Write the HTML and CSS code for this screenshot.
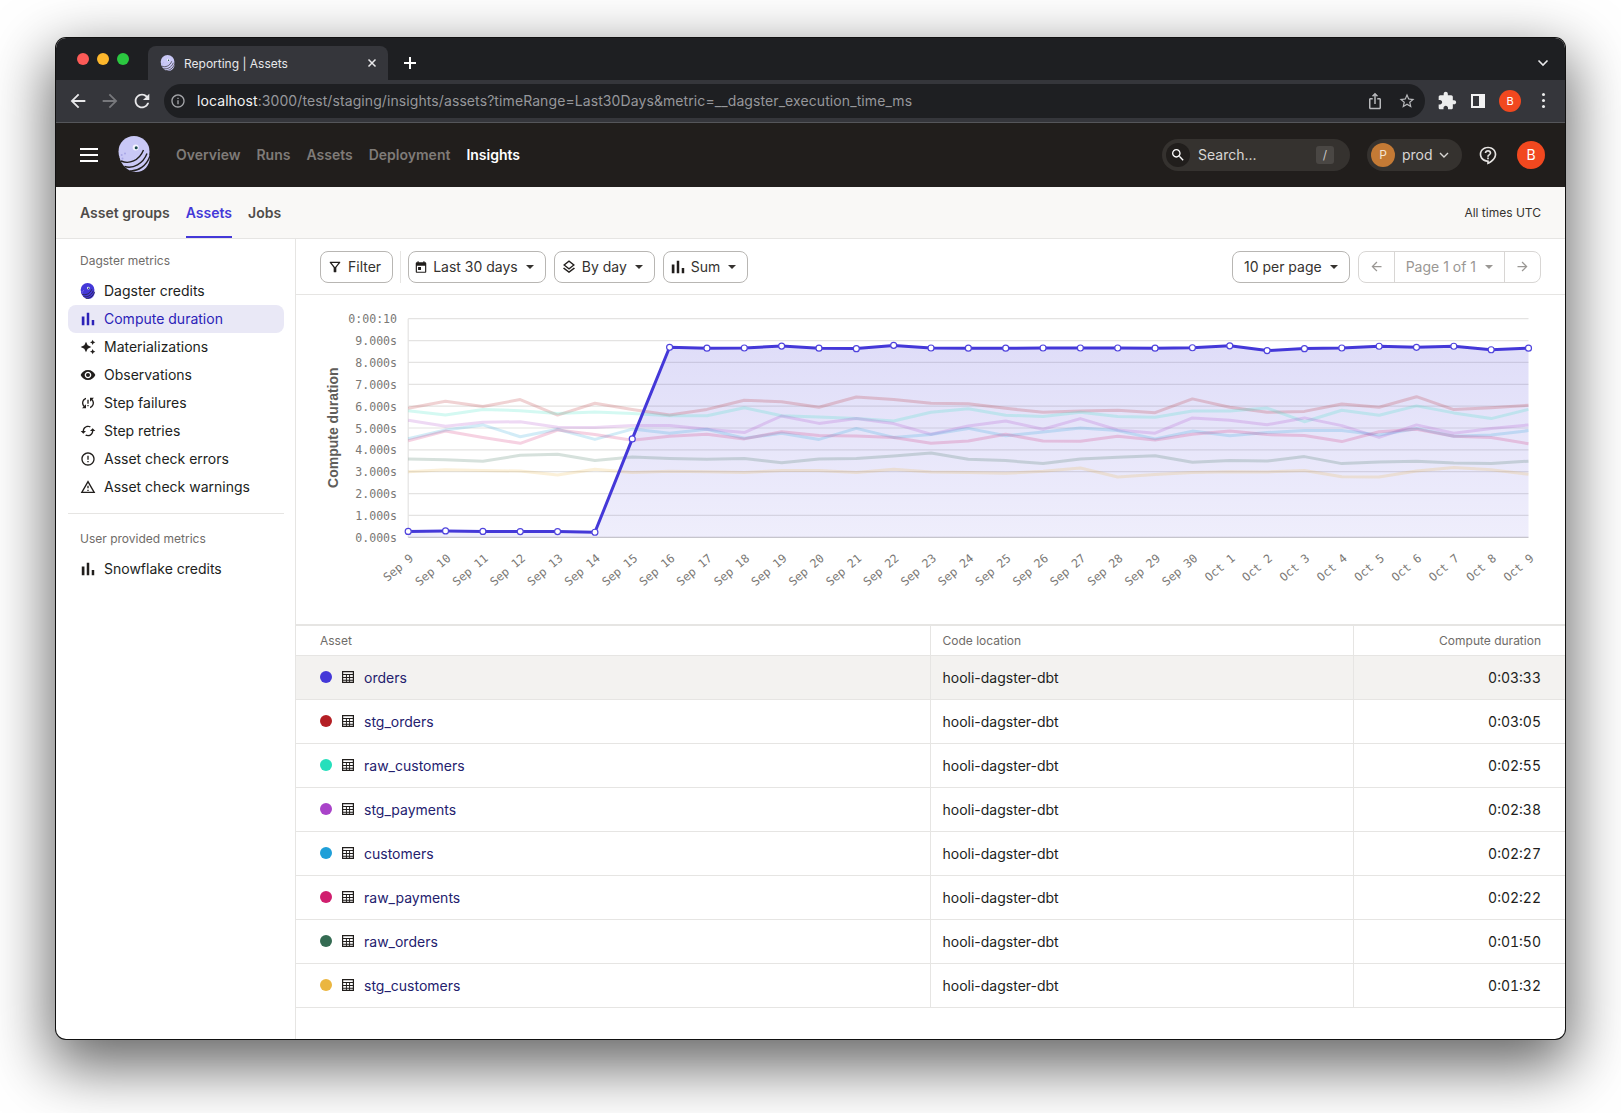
FILE: index.html
```html
<!DOCTYPE html>
<html lang="en">
<head>
    <meta charset="UTF-8">
    <meta name="viewport" content="width=device-width, initial-scale=1.0">
    <title>Reporting | Assets</title>
    <link rel="stylesheet" href="styles.css">
</head>
<body>
    <!-- Shared icons -->
    <svg class="icon-defs" width="0" height="0">
        <symbol id="i-bars" viewBox="3 3 18 18"><path d="M5 9.200h3V19H5zM10.600 5h2.800v14h-2.800zm5.600 8H19v6h-2.800z"/></symbol>
        <symbol id="i-table" viewBox="0 0 14 14"><path d="M0 0h14v14H0zM1.400 1.400v2.200h11.200V1.400zm0 3.400v2.300h3.200V4.800zm4.300 0v2.300h2.600V4.800zm3.700 0v2.300h3.200V4.800zM1.400 8.200v2h3.200v-2zm4.300 0v2h2.600v-2zm3.700 0v2h3.200v-2zm-8 3.100v1.300h3.200v-1.300zm4.300 0v1.300h2.600v-1.300zm3.700 0v1.300h3.200v-1.300z" fill-rule="evenodd"/></symbol>
        <symbol id="i-logo" viewBox="0 0 36 36">
            <circle cx="17" cy="15.500" r="15.500"/>
            <path d="M2.500 21C4 29 11 36 19 36c8 0 13.500-6 14-15l-3-6z"/>
            <path class="logo-cut" d="M4 25C12 28.500 22 25 26.500 14M7.500 30.500C16 33 26 28 30 17.500M13 35C21 35.500 29.500 30 33 20" fill="none" stroke-width="1.400"/>
            <circle class="logo-spot" cx="4.700" cy="19" r="1"/>
            <circle class="logo-spot" cx="8" cy="17.500" r="1"/>
            <circle class="logo-spot" cx="5.500" cy="22.500" r="1"/>
            <circle class="logo-eye" cx="18.700" cy="11.500" r="3"/>
            <circle class="logo-pupil" cx="19.200" cy="11.800" r="1.500"/>
        </symbol>
    </svg>

    <div class="window">
        <!-- Browser chrome -->
        <div class="tabstrip">
            <div class="lights">
                <span class="light light-red"></span>
                <span class="light light-yellow"></span>
                <span class="light light-green"></span>
            </div>
            <div class="tab">
                <svg class="logo logo-tab"><use href="#i-logo"/></svg>
                <span class="tab-title">Reporting | Assets</span>
                <svg class="tab-close" viewBox="0 0 10 10"><path d="M1.500 1.500l7 7M8.500 1.500l-7 7"/></svg>
            </div>
            <svg class="tab-new" viewBox="0 0 12 12"><path d="M6 0v12M0 6h12"/></svg>
            <svg class="tab-more" viewBox="0 0 12 8"><path d="M1.500 1.500L6 6l4.500-4.500"/></svg>
        </div>
        <div class="toolbar">
            <svg class="tool-icon" viewBox="0 0 24 24"><path d="M20 11H7.830l5.590-5.590L12 4l-8 8 8 8 1.410-1.410L7.830 13H20v-2z"/></svg>
            <svg class="tool-icon tool-off" viewBox="0 0 24 24"><path d="M12 4l-1.410 1.410L16.170 11H4v2h12.170l-5.580 5.590L12 20l8-8z"/></svg>
            <svg class="tool-icon" viewBox="0 0 24 24"><path d="M17.650 6.350C16.200 4.900 14.210 4 12 4c-4.420 0-7.990 3.580-7.990 8s3.570 8 7.990 8c3.730 0 6.840-2.550 7.730-6h-2.080c-.82 2.330-3.040 4-5.650 4-3.310 0-6-2.690-6-6s2.690-6 6-6c1.660 0 3.140.69 4.220 1.780L13 11h7V4l-2.350 2.350z"/></svg>
            <div class="addressbar">
                <svg class="addr-info" viewBox="0 0 24 24"><path d="M11 7h2v2h-2zm0 4h2v6h-2zm1-9C6.480 2 2 6.480 2 12s4.480 10 10 10 10-4.480 10-10S17.520 2 12 2zm0 18c-4.410 0-8-3.590-8-8s3.590-8 8-8 8 3.590 8 8-3.590 8-8 8z"/></svg>
                <span class="url"><b>localhost</b>:3000/test/staging/insights/assets?timeRange=Last30Days&amp;metric=__dagster_execution_time_ms</span>
                <svg class="addr-icon" viewBox="0 0 24 24"><path d="M16 5l-1.420 1.420-1.590-1.590V16h-1.980V4.830L9.410 6.420 8 5l4-4 4 4zm4 5v11c0 1.100-.9 2-2 2H6c-1.110 0-2-.9-2-2V10c0-1.110.89-2 2-2h3v2H6v11h12V10h-3V8h3c1.100 0 2 .89 2 2z"/></svg>
                <svg class="addr-icon" viewBox="0 0 24 24"><path d="M22 9.240l-7.190-.62L12 2 9.190 8.630 2 9.240l5.460 4.730L5.820 21 12 17.270 18.180 21l-1.630-7.030L22 9.240zM12 15.400l-3.760 2.270 1-4.280-3.320-2.880 4.380-.38L12 6.100l1.710 4.040 4.380.38-3.320 2.880 1 4.280L12 15.400z"/></svg>
            </div>
            <svg class="ext-icon" viewBox="0 0 24 24"><path d="M20.500 11H19V7c0-1.100-.9-2-2-2h-4V3.500C13 2.120 11.880 1 10.500 1S8 2.120 8 3.500V5H4c-1.100 0-1.990.9-1.990 2v3.800H3.500c1.490 0 2.700 1.210 2.700 2.700s-1.210 2.700-2.700 2.700H2V20c0 1.100.9 2 2 2h3.800v-1.500c0-1.490 1.210-2.700 2.700-2.700 1.490 0 2.700 1.210 2.700 2.700V22H17c1.100 0 2-.9 2-2v-4h1.500c1.380 0 2.500-1.120 2.500-2.500S21.880 11 20.500 11z"/></svg>
            <span class="panel-icon"></span>
            <span class="chrome-avatar">B</span>
            <span class="kebab"><i></i><i></i><i></i></span>
        </div>

        <!-- App header -->
        <header class="appbar">
            <span class="burger"><i></i><i></i><i></i></span>
            <svg class="logo logo-app"><use href="#i-logo"/></svg>
            <nav class="appnav">
                <a>Overview</a>
                <a>Runs</a>
                <a>Assets</a>
                <a>Deployment</a>
                <a class="current">Insights</a>
            </nav>
            <div class="search">
                <span class="search-glass">
                    <svg viewBox="0 0 24 24"><path d="M15.500 14h-.79l-.28-.27C15.410 12.590 16 11.110 16 9.500 16 5.910 13.090 3 9.500 3S3 5.910 3 9.500 5.910 16 9.500 16c1.610 0 3.090-.59 4.230-1.570l.27.28v.79l5 4.990L20.490 19l-4.990-5zm-6 0C7.010 14 5 11.990 5 9.500S7.010 5 9.500 5 14 7.010 14 9.500 11.990 14 9.500 14z"/></svg>
                </span>
                <span class="search-text">Search...</span>
                <span class="search-key">/</span>
            </div>
            <div class="deploy">
                <span class="deploy-badge">P</span>
                <span class="deploy-name">prod</span>
                <svg class="deploy-caret" viewBox="0 0 12 8"><path d="M2 2l4 4 4-4"/></svg>
            </div>
            <svg class="help" viewBox="0 0 24 24"><path d="M11 23.500v-3.100C5.900 20 2 16.100 2 11.200 2 6.100 6.300 2 12 2s10 4.100 10 9.200c0 5.200-4.500 9.800-11 12.300zM12 4c-4.600 0-8 3.100-8 7.200 0 4 3.300 7.300 9 7.300v1.900c3.700-2 7-5.400 7-9.200C20 7.100 16.600 4 12 4z"/><path d="M11 15h2v2h-2zM12 6c-2.200 0-3.800 1.500-4 3.500h2c.1-.9.9-1.500 2-1.500s2 .7 2 1.600c0 1.800-3 1.700-3 4.400h2c0-2 3-2.200 3-4.400C16 7.500 14.300 6 12 6z"/></svg>
            <span class="user-avatar">B</span>
        </header>

        <!-- Sub navigation -->
        <div class="subnav">
            <a>Asset groups</a>
            <a class="active">Assets</a>
            <a>Jobs</a>
            <span class="timezone">All times UTC</span>
        </div>

        <div class="content">
            <aside class="sidebar">
                <div class="side-label">Dagster metrics</div>
                <a class="side-item">
                    <svg class="logo logo-side"><use href="#i-logo"/></svg>Dagster credits
                </a>
                <a class="side-item selected">
                    <svg viewBox="0 0 24 24"><use href="#i-bars"/></svg>Compute duration
                </a>
                <a class="side-item">
                    <svg viewBox="0 0 24 24"><path d="M19 9l1.250-2.750L23 5l-2.750-1.250L19 1l-1.250 2.750L15 5l2.750 1.250L19 9zm-7.500.5L9 4 6.500 9.500 1 12l5.500 2.500L9 20l2.500-5.500L17 12l-5.500-2.500zM19 15l-1.250 2.750L15 19l2.750 1.250L19 23l1.250-2.750L23 19l-2.750-1.250L19 15z"/></svg>Materializations
                </a>
                <a class="side-item">
                    <svg viewBox="0 0 24 24"><path d="M12 4.500C7 4.500 2.730 7.610 1 12c1.730 4.390 6 7.500 11 7.500s9.270-3.110 11-7.500c-1.730-4.390-6-7.500-11-7.500zM12 17c-2.760 0-5-2.240-5-5s2.240-5 5-5 5 2.240 5 5-2.240 5-5 5zm0-8c-1.660 0-3 1.340-3 3s1.340 3 3 3 3-1.340 3-3-1.340-3-3-3z"/></svg>Observations
                </a>
                <a class="side-item">
                    <svg viewBox="0 0 24 24"><path d="M3 12c0 2.210.91 4.200 2.360 5.640L3 20h6v-6l-2.240 2.240C5.680 15.150 5 13.660 5 12c0-2.610 1.670-4.830 4-5.650V4.260C5.550 5.150 3 8.270 3 12zm8 5h2v-2h-2v2zM21 4h-6v6l2.240-2.240C18.320 8.850 19 10.340 19 12c0 2.610-1.670 4.830-4 5.650v2.090c3.450-.89 6-4.010 6-7.740 0-2.210-.91-4.200-2.360-5.640L21 4zm-10 9h2V7h-2v6z"/></svg>Step failures
                </a>
                <a class="side-item">
                    <svg viewBox="0 0 24 24"><path d="M19 8l-4 4h3c0 3.310-2.690 6-6 6-1.010 0-1.970-.25-2.800-.7l-1.460 1.460C8.970 19.540 10.430 20 12 20c4.420 0 8-3.580 8-8h3l-4-4zM6 12c0-3.310 2.690-6 6-6 1.010 0 1.970.25 2.800.7l1.460-1.460C15.030 4.460 13.570 4 12 4c-4.420 0-8 3.580-8 8H1l4 4 4-4H6z"/></svg>Step retries
                </a>
                <a class="side-item">
                    <svg viewBox="0 0 24 24"><path d="M11 15h2v2h-2zm0-8h2v6h-2zm.99-5C6.470 2 2 6.480 2 12s4.470 10 9.990 10C17.520 22 22 17.520 22 12S17.520 2 11.990 2zM12 20c-4.420 0-8-3.580-8-8s3.580-8 8-8 8 3.580 8 8-3.580 8-8 8z"/></svg>Asset check errors
                </a>
                <a class="side-item">
                    <svg viewBox="0 0 24 24"><path d="M12 5.990L19.530 19H4.470L12 5.990M12 2L1 21h22L12 2zm1 14h-2v2h2v-2zm0-6h-2v4h2v-4z"/></svg>Asset check warnings
                </a>
                <div class="side-divider"></div>
                <div class="side-label">User provided metrics</div>
                <a class="side-item">
                    <svg viewBox="0 0 24 24"><use href="#i-bars"/></svg>Snowflake credits
                </a>
            </aside>

            <main class="main">
                <div class="filters">
                    <button class="btn">
                        <svg viewBox="0 0 24 24"><path d="M4.250 5.610C6.270 8.200 10 13 10 13v6c0 .55.45 1 1 1h2c.55 0 1-.45 1-1v-6s3.720-4.800 5.740-7.390C20.250 4.950 19.780 4 18.950 4H5.040c-.83 0-1.300.95-.79 1.610zM7 6h10l-5.010 6.300z" fill-rule="evenodd"/></svg>Filter
                    </button>
                    <span class="filters-sep"></span>
                    <button class="btn">
                        <svg class="icon-small" viewBox="0 0 24 24"><path d="M19 4h-1V2h-2v2H8V2H6v2H5c-1.110 0-2 .9-2 2v14c0 1.100.89 2 2 2h14c1.100 0 2-.9 2-2V6c0-1.100-.9-2-2-2zm0 16H5V10h14zM7 12h5v5H7z"/></svg>Last 30 days<span class="caret"></span>
                    </button>
                    <button class="btn">
                        <svg viewBox="0 0 24 24"><path d="M11.990 18.540l-7.370-5.730L3 14.070l9 7 9-7-1.630-1.270zM12 16l7.360-5.730L21 9l-9-7-9 7 1.630 1.270L12 16zm0-11.470L17.740 9 12 13.470 6.260 9 12 4.530z"/></svg>By day<span class="caret"></span>
                    </button>
                    <button class="btn">
                        <svg viewBox="0 0 24 24"><use href="#i-bars"/></svg>Sum<span class="caret"></span>
                    </button>
                    <button class="btn per-page">10 per page<span class="caret"></span></button>
                    <div class="pager">
                        <span class="pager-arrow"><svg viewBox="0 0 24 24"><path d="M20 11H7.830l5.590-5.590L12 4l-8 8 8 8 1.410-1.410L7.830 13H20v-2z"/></svg></span>
                        <span class="pager-page">Page 1 of 1<span class="caret"></span></span>
                        <span class="pager-arrow"><svg viewBox="0 0 24 24"><path d="M12 4l-1.410 1.410L16.170 11H4v2h12.170l-5.580 5.590L12 20l8-8z"/></svg></span>
                    </div>
                </div>

                <svg id="chart" class="chart" viewBox="296 295 1268 329"></svg>

                <table class="assets">
                    <thead>
                        <tr><th>Asset</th><th>Code location</th><th class="num">Compute duration</th></tr>
                    </thead>
                    <tbody>
                        <tr class="hovered">
                            <td><span class="asset"><i class="dot dot-1"></i><svg class="table-icon"><use href="#i-table"/></svg><a>orders</a></span></td>
                            <td>hooli-dagster-dbt</td><td class="num">0:03:33</td>
                        </tr>
                        <tr>
                            <td><span class="asset"><i class="dot dot-2"></i><svg class="table-icon"><use href="#i-table"/></svg><a>stg_orders</a></span></td>
                            <td>hooli-dagster-dbt</td><td class="num">0:03:05</td>
                        </tr>
                        <tr>
                            <td><span class="asset"><i class="dot dot-3"></i><svg class="table-icon"><use href="#i-table"/></svg><a>raw_customers</a></span></td>
                            <td>hooli-dagster-dbt</td><td class="num">0:02:55</td>
                        </tr>
                        <tr>
                            <td><span class="asset"><i class="dot dot-4"></i><svg class="table-icon"><use href="#i-table"/></svg><a>stg_payments</a></span></td>
                            <td>hooli-dagster-dbt</td><td class="num">0:02:38</td>
                        </tr>
                        <tr>
                            <td><span class="asset"><i class="dot dot-5"></i><svg class="table-icon"><use href="#i-table"/></svg><a>customers</a></span></td>
                            <td>hooli-dagster-dbt</td><td class="num">0:02:27</td>
                        </tr>
                        <tr>
                            <td><span class="asset"><i class="dot dot-6"></i><svg class="table-icon"><use href="#i-table"/></svg><a>raw_payments</a></span></td>
                            <td>hooli-dagster-dbt</td><td class="num">0:02:22</td>
                        </tr>
                        <tr>
                            <td><span class="asset"><i class="dot dot-7"></i><svg class="table-icon"><use href="#i-table"/></svg><a>raw_orders</a></span></td>
                            <td>hooli-dagster-dbt</td><td class="num">0:01:50</td>
                        </tr>
                        <tr>
                            <td><span class="asset"><i class="dot dot-8"></i><svg class="table-icon"><use href="#i-table"/></svg><a>stg_customers</a></span></td>
                            <td>hooli-dagster-dbt</td><td class="num">0:01:32</td>
                        </tr>
                    </tbody>
                </table>
            </main>
        </div>
    </div>

    <script src="chart.js"></script>
</body>
</html>
```

FILE: styles.css
```css
* {
    box-sizing: border-box;
}

body {
    margin: 0;
    padding: 38px 0 0 56px;
    width: 1621px;
    height: 1113px;
    overflow: hidden;
    background: #fff;
    font-family: Inter, "Noto Sans", sans-serif;
    font-size: 14px;
    color: #211e1c;
}

a {
    color: inherit;
}

.icon-defs {
    position: absolute;
}

.window {
    width: 1509px;
    height: 1001px;
    border-radius: 10px;
    overflow: hidden;
    display: flex;
    flex-direction: column;
    background: #fff;
    box-shadow: 0 0 0 1px #111, 0 22px 60px 6px rgba(0, 0, 0, 0.6);
}

/* Browser chrome */
.tabstrip {
    height: 42px;
    flex: none;
    display: flex;
    align-items: flex-end;
    background: #1e1f22;
}

.lights {
    display: flex;
    gap: 8px;
    width: 92px;
    align-self: flex-start;
    padding: 15px 0 0 21px;
}

.light {
    width: 12px;
    height: 12px;
    border-radius: 50%;
}

.light-red { background: #fc5a57; }
.light-yellow { background: #fdb72c; }
.light-green { background: #2bc840; }

.tab {
    width: 240px;
    height: 34px;
    display: flex;
    align-items: center;
    padding: 0 11px 0 12px;
    border-radius: 8px 8px 0 0;
    background: #35363b;
    color: #e8e8ea;
    font-size: 12px;
    white-space: nowrap;
}

.tab-title {
    flex: 1;
    margin-left: 8px;
}

.logo-tab {
    width: 16px;
    height: 16px;
    flex: none;
}

.logo-tab .logo-cut {
    stroke: #35363b;
}

.tab-close {
    width: 10px;
    height: 10px;
    fill: none;
    stroke: #e8e8ea;
    stroke-width: 1.5;
}

.tab-new {
    width: 12px;
    height: 12px;
    margin: 0 0 11px 16px;
    fill: none;
    stroke: #fff;
    stroke-width: 2;
}

.tab-more {
    width: 12px;
    height: 8px;
    margin: 0 16px 13px auto;
    fill: none;
    stroke: #e8e8ea;
    stroke-width: 1.6;
}

.toolbar {
    height: 43px;
    flex: none;
    display: flex;
    align-items: center;
    padding: 0 0 1px 11px;
    background: #35363b;
    border-bottom: 1px solid #55565a;
}

.tool-icon {
    width: 22px;
    height: 22px;
    margin-right: 10px;
    fill: #e8e8ea;
}

.tool-off {
    fill: #77787c;
}

.addressbar {
    width: 1261px;
    height: 34px;
    margin-left: 1px;
    display: flex;
    align-items: center;
    padding: 0 9px 0 6px;
    border-radius: 17px;
    background: #1e1f22;
    color: #96979b;
}

.addr-info {
    width: 16px;
    height: 16px;
    margin: 0 11px 0 0;
    flex: none;
    fill: #a4a5a9;
}

.url {
    flex: 1;
    font-size: 14px;
    letter-spacing: 0.09px;
    white-space: nowrap;
}

.url b {
    font-weight: 400;
    color: #f2f2f3;
}

.addr-icon {
    width: 18px;
    height: 18px;
    margin-left: 14px;
    fill: #b8b9bc;
}

.ext-icon {
    width: 20px;
    height: 20px;
    margin-left: 12px;
    fill: #eceded;
}

.panel-icon {
    width: 14px;
    height: 14px;
    margin-left: 14px;
    border: 2px solid #f2f2f3;
    border-right-width: 6px;
    background: #35363b;
}

.chrome-avatar {
    width: 22px;
    height: 22px;
    margin-left: 14px;
    border-radius: 50%;
    background: #f1481f;
    color: #fff;
    font-size: 11px;
    line-height: 22px;
    text-align: center;
}

.kebab {
    display: flex;
    flex-direction: column;
    gap: 3px;
    margin-left: 21px;
}

.kebab i {
    width: 3px;
    height: 3px;
    border-radius: 50%;
    background: #eceded;
}

/* App header */
.appbar {
    height: 64px;
    flex: none;
    display: flex;
    align-items: center;
    padding: 0 20px 0 24px;
    background: #211e1c;
    color: #fff;
}

.burger {
    display: flex;
    flex-direction: column;
    gap: 4px;
    width: 18px;
}

.burger i {
    height: 2px;
    background: #fff;
}

.logo-app {
    width: 36px;
    height: 36px;
    margin: 0 0 3px 19px;
}

.logo {
    fill: #c9c8f6;
}

.logo-cut {
    stroke: #211e1c;
}

.logo-spot {
    fill: #a9a7e6;
}

.logo-eye {
    fill: #f4f4ff;
}

.logo-pupil {
    fill: #1c4a4c;
}

.appnav {
    display: flex;
    gap: 16px;
    margin: 0 0 1px 23px;
    flex: 1;
    font-weight: 600;
    color: #7f7b78;
}

.appnav .current {
    color: #fff;
}

.search {
    width: 188px;
    height: 32px;
    display: flex;
    align-items: center;
    padding: 0 16px 0 4px;
    border-radius: 16px;
    background: #35322f;
    color: #d8d6d4;
}

.search-glass {
    width: 24px;
    height: 24px;
    padding: 4px;
    border-radius: 50%;
    background: #211e1c;
}

.search-glass svg {
    display: block;
    width: 16px;
    height: 16px;
    fill: #fff;
}

.search-text {
    flex: 1;
    margin: 0 0 1px 8px;
}

.search-key {
    width: 18px;
    height: 18px;
    border-radius: 3px;
    background: #4a4744;
    font-size: 12px;
    line-height: 18px;
    text-align: center;
    color: #c8c6c4;
}

.deploy {
    width: 95px;
    height: 32px;
    margin-left: 17px;
    display: flex;
    align-items: center;
    padding: 0 12px 0 4px;
    border-radius: 16px;
    background: #35322f;
    color: #d8d6d4;
}

.deploy-badge {
    width: 24px;
    height: 24px;
    border-radius: 50%;
    background: #c47a35;
    color: #f4e4d2;
    font-size: 12px;
    line-height: 24px;
    text-align: center;
}

.deploy-name {
    flex: 1;
    margin: 0 0 1px 7px;
}

.deploy-caret {
    width: 12px;
    height: 8px;
    fill: none;
    stroke: #d8d6d4;
    stroke-width: 1.4;
}

.help {
    width: 20px;
    height: 20px;
    margin-left: 16px;
    fill: #e6e4e2;
}

.user-avatar {
    width: 28px;
    height: 28px;
    margin-left: 19px;
    border-radius: 50%;
    background: #f1481f;
    color: #fff;
    line-height: 28px;
    text-align: center;
    font-size: 14px;
}

/* Sub navigation */
.subnav {
    height: 52px;
    flex: none;
    display: flex;
    gap: 16px;
    padding: 0 24px;
    background: #f9f8f6;
    border-bottom: 1px solid #e6e5e3;
    font-weight: 600;
    color: #4f4c49;
}

.subnav a {
    line-height: 52px;
    height: 51px;
}

.subnav .active {
    color: #4438d8;
    border-bottom: 2px solid #4438d8;
}

.timezone {
    margin-left: auto;
    font-size: 12px;
    font-weight: 400;
    line-height: 52px;
    color: #35322f;
}

/* Sidebar */
.content {
    flex: 1;
    display: flex;
    min-height: 0;
}

.sidebar {
    width: 240px;
    flex: none;
    padding: 12px 11px 0 12px;
    border-right: 1px solid #e6e5e3;
}

.side-label {
    height: 20px;
    padding: 0 12px;
    font-size: 12px;
    line-height: 20px;
    color: #6f6c69;
}

.side-label + .side-item {
    margin-top: 6px;
}

.side-item {
    height: 28px;
    display: flex;
    align-items: center;
    gap: 8px;
    padding: 0 12px 1px;
    border-radius: 8px;
}

.side-item svg {
    width: 16px;
    height: 16px;
    flex: none;
    fill: #211e1c;
}

.side-item .logo-side {
    fill: #4438d8;
}

.logo-side .logo-cut {
    stroke: #e9e8fb;
}

.logo-side .logo-spot {
    fill: #8f88ea;
}

.selected {
    background: #e9e8f6;
    color: #2c22b8;
}

.side-item.selected svg {
    fill: #2c22b8;
}

.side-divider {
    height: 1px;
    margin: 12px 0 15px;
    background: #e6e5e3;
}

/* Main column */
.main {
    flex: 1;
    min-width: 0;
}

.filters {
    height: 56px;
    display: flex;
    align-items: center;
    gap: 8px;
    padding: 0 24px;
    border-bottom: 1px solid #e6e5e3;
}

.btn {
    height: 32px;
    display: flex;
    align-items: center;
    gap: 5px;
    padding: 0 11px 0 6px;
    border: 1px solid #b8b6b3;
    border-radius: 8px;
    background: #fff;
    font: inherit;
    color: #35322f;
}

.btn svg {
    width: 16px;
    height: 16px;
    fill: #211e1c;
}

.btn .icon-small {
    width: 14px;
    height: 14px;
    margin-left: -1px;
}

.caret {
    width: 0;
    height: 0;
    margin-left: 3px;
    border: 4px solid transparent;
    border-top-color: currentColor;
    border-bottom-width: 0;
}

.filters-sep {
    width: 1px;
    height: 32px;
    margin: 0 -1px;
    background: #e6e5e3;
}

.btn.per-page {
    margin-left: auto;
    padding-left: 11px;
}

.pager {
    height: 32px;
    display: flex;
    border: 1px solid #d8d6d4;
    border-radius: 8px;
    color: #9a9794;
}

.pager-arrow {
    width: 35px;
    display: flex;
    align-items: center;
    justify-content: center;
}

.pager-arrow svg {
    width: 15px;
    height: 15px;
    fill: #9a9794;
}

.pager-page {
    display: flex;
    align-items: center;
    gap: 6px;
    padding: 0 11px;
    border: solid #d8d6d4;
    border-width: 0 1px;
}

.chart {
    display: block;
    width: 100%;
    height: 329px;
}

.tick {
    font: 11.6px "DejaVu Sans Mono", "Liberation Mono", monospace;
    fill: #7a7875;
}

.axis-title {
    font: bold 14px "Liberation Sans", sans-serif;
    fill: #5f5d5a;
}

/* Table */
.assets {
    width: 100%;
    table-layout: fixed;
    border-collapse: collapse;
    border-top: 2px solid #e6e5e3;
}

.assets th {
    height: 30px;
    padding: 0 12px;
    font-size: 12px;
    font-weight: 400;
    text-align: left;
    color: #6f6c69;
}

.assets td {
    height: 44px;
    padding: 0 12px;
}

.assets th:first-child,
.assets td:first-child {
    width: 634px;
    padding-left: 24px;
}

.assets th:last-child,
.assets td:last-child {
    width: 212px;
    padding-right: 24px;
}

.assets th + th,
.assets td + td {
    border-left: 1px solid #e6e5e3;
}

.assets tr {
    border-bottom: 1px solid #e6e5e3;
}

.assets .num {
    text-align: right;
}

.assets td.num {
    font-variant-numeric: tabular-nums;
}

.hovered {
    background: #f3f2f0;
}

.asset {
    display: flex;
    align-items: center;
}

.asset a {
    color: #24216e;
}

.dot {
    width: 12px;
    height: 12px;
    border-radius: 50%;
}

.dot-1 { background: #4438d8; }
.dot-2 { background: #b41f24; }
.dot-3 { background: #26dfbc; }
.dot-4 { background: #a943c9; }
.dot-5 { background: #1f9fd8; }
.dot-6 { background: #d01e6e; }
.dot-7 { background: #346b52; }
.dot-8 { background: #ebb640; }

.table-icon {
    width: 12px;
    height: 12px;
    margin: 0 10px;
    fill: #211e1c;
}
```

FILE: chart.js
```js
const NS = 'http://www.w3.org/2000/svg';
const chart = document.getElementById('chart');

// Plot area, same numbers as the svg viewBox
const left = 407.7;
const right = 1528;
const bottom = 537.3;
const step = 21.86;

const labels = [];
for (let d = 9; d <= 30; d++) labels.push('Sep ' + d);
for (let d = 1; d <= 9; d++) labels.push('Oct ' + d);

const series = [
    { color: '#b41f24', values: [5.9, 6.22, 5.99, 6.3, 5.59, 6.13, 5.85, 5.59, 5.85, 6.27, 6.2, 5.95, 6.42, 6.3, 6.13, 6.11, 5.9, 5.72, 5.78, 5.81, 5.7, 6.33, 5.95, 5.72, 5.76, 6.1, 5.95, 6.43, 5.84, 5.93, 6.04] },
    { color: '#26dfbc', values: [5.79, 5.59, 5.85, 5.79, 5.67, 5.73, 5.67, 5.56, 5.56, 5.93, 5.56, 5.5, 5.44, 5.32, 5.72, 5.88, 5.58, 5.53, 5.72, 5.52, 5.49, 5.78, 5.78, 5.91, 5.29, 5.81, 5.58, 6.01, 5.69, 5.43, 5.85] },
    { color: '#a943c9', values: [5.35, 5.08, 5.26, 5.29, 5.03, 5.02, 5.12, 5.12, 4.94, 4.79, 5.55, 5.21, 5.44, 5.2, 4.71, 5.09, 5.32, 4.94, 5.43, 4.91, 4.76, 5.46, 5.35, 5.15, 5.46, 5.11, 4.57, 5.14, 4.76, 4.98, 5.14] },
    { color: '#1f9fd8', values: [4.51, 4.91, 5.14, 4.6, 4.94, 4.48, 4.95, 4.76, 4.94, 4.53, 4.76, 4.48, 4.98, 4.57, 4.7, 4.98, 4.65, 4.82, 5, 4.88, 4.5, 4.86, 4.65, 4.79, 4.88, 4.88, 4.68, 4.98, 4.62, 4.68, 4.88] },
    { color: '#d01e6e', values: [4.42, 4.86, 4.57, 4.3, 4.91, 4.7, 4.44, 4.62, 4.71, 4.5, 4.83, 4.66, 4.63, 4.57, 4.3, 4.41, 4.71, 4.41, 4.39, 4.62, 4.45, 4.71, 4.86, 4.7, 4.66, 4.38, 4.83, 4.94, 4.62, 4.57, 4.28] },
    { color: '#346b52', values: [3.58, 3.55, 3.48, 3.75, 3.8, 3.52, 3.67, 3.6, 3.57, 3.61, 3.41, 3.58, 3.6, 3.72, 3.86, 3.57, 3.51, 3.37, 3.58, 3.66, 3.73, 3.43, 3.52, 3.49, 3.69, 3.37, 3.45, 3.48, 3.4, 3.37, 3.48] },
    { color: '#ebb640', values: [3, 3.09, 3.06, 3.03, 2.85, 3.11, 2.97, 3.02, 3, 2.97, 3.05, 3.06, 2.96, 3.11, 2.99, 2.97, 2.93, 3.02, 3.17, 2.76, 2.87, 2.97, 3, 2.99, 3.06, 2.77, 2.76, 3.03, 3.19, 3.09, 2.88] }
];

const orders = [0.27, 0.29, 0.27, 0.26, 0.26, 0.23, 4.5, 8.69, 8.65, 8.66, 8.75, 8.65, 8.63, 8.78, 8.66, 8.65, 8.65, 8.66, 8.66, 8.66, 8.65, 8.67, 8.76, 8.54, 8.63, 8.66, 8.74, 8.69, 8.74, 8.58, 8.65];

function add(name, attrs, text) {
    const el = document.createElementNS(NS, name);
    for (const key in attrs) el.setAttribute(key, attrs[key]);
    if (text) el.textContent = text;
    chart.appendChild(el);
    return el;
}

function xAt(i) {
    return left + i * (right - left) / 30;
}

function yAt(v) {
    return bottom - v * step;
}

function points(values) {
    return values.map((v, i) => xAt(i).toFixed(1) + ',' + yAt(v).toFixed(1)).join(' ');
}

// Gradient under the selected series
const defs = add('defs', {});
defs.innerHTML = '<linearGradient id="area" x1="0" y1="0" x2="0" y2="1">' +
    '<stop offset="0" stop-color="#4438d8" stop-opacity="0.17"/>' +
    '<stop offset="1" stop-color="#4438d8" stop-opacity="0.085"/></linearGradient>';

// Grid and y axis
for (let v = 0; v <= 10; v++) {
    add('line', { x1: left, x2: right, y1: yAt(v), y2: yAt(v), stroke: v === 0 ? '#c9c8cc' : '#e4e3e2', 'stroke-width': 1.2 });
    const tick = v === 10 ? '0:00:10' : v + '.000s';
    add('text', { x: 396.6, y: yAt(v) + 4.5, 'text-anchor': 'end', class: 'tick' }, tick);
}
add('line', { x1: left, x2: left, y1: yAt(10), y2: bottom, stroke: '#e4e3e2', 'stroke-width': 1.2 });
add('text', { transform: 'translate(337 427.7) rotate(-90)', 'text-anchor': 'middle', class: 'axis-title' }, 'Compute duration');

// X axis labels
labels.forEach((label, i) => {
    const x = xAt(i) + 6;
    add('text', { transform: 'translate(' + x + ' 559.5) rotate(-40)', 'text-anchor': 'end', class: 'tick' }, label);
});

// Faded series, then the selected one on top
add('polygon', { points: left + ',' + bottom + ' ' + points(orders) + ' ' + right + ',' + bottom, fill: 'url(#area)' });
series.forEach((s) => {
    add('polyline', { points: points(s.values), fill: 'none', stroke: s.color, 'stroke-width': 3, 'stroke-opacity': 0.2, 'stroke-linejoin': 'round' });
});
add('polyline', { points: points(orders), fill: 'none', stroke: '#4438d8', 'stroke-width': 3, 'stroke-linejoin': 'round' });
orders.forEach((v, i) => {
    add('circle', { cx: xAt(i), cy: yAt(v), r: 3, fill: '#fff', stroke: '#4f43dd', 'stroke-width': 1.2 });
});
```
